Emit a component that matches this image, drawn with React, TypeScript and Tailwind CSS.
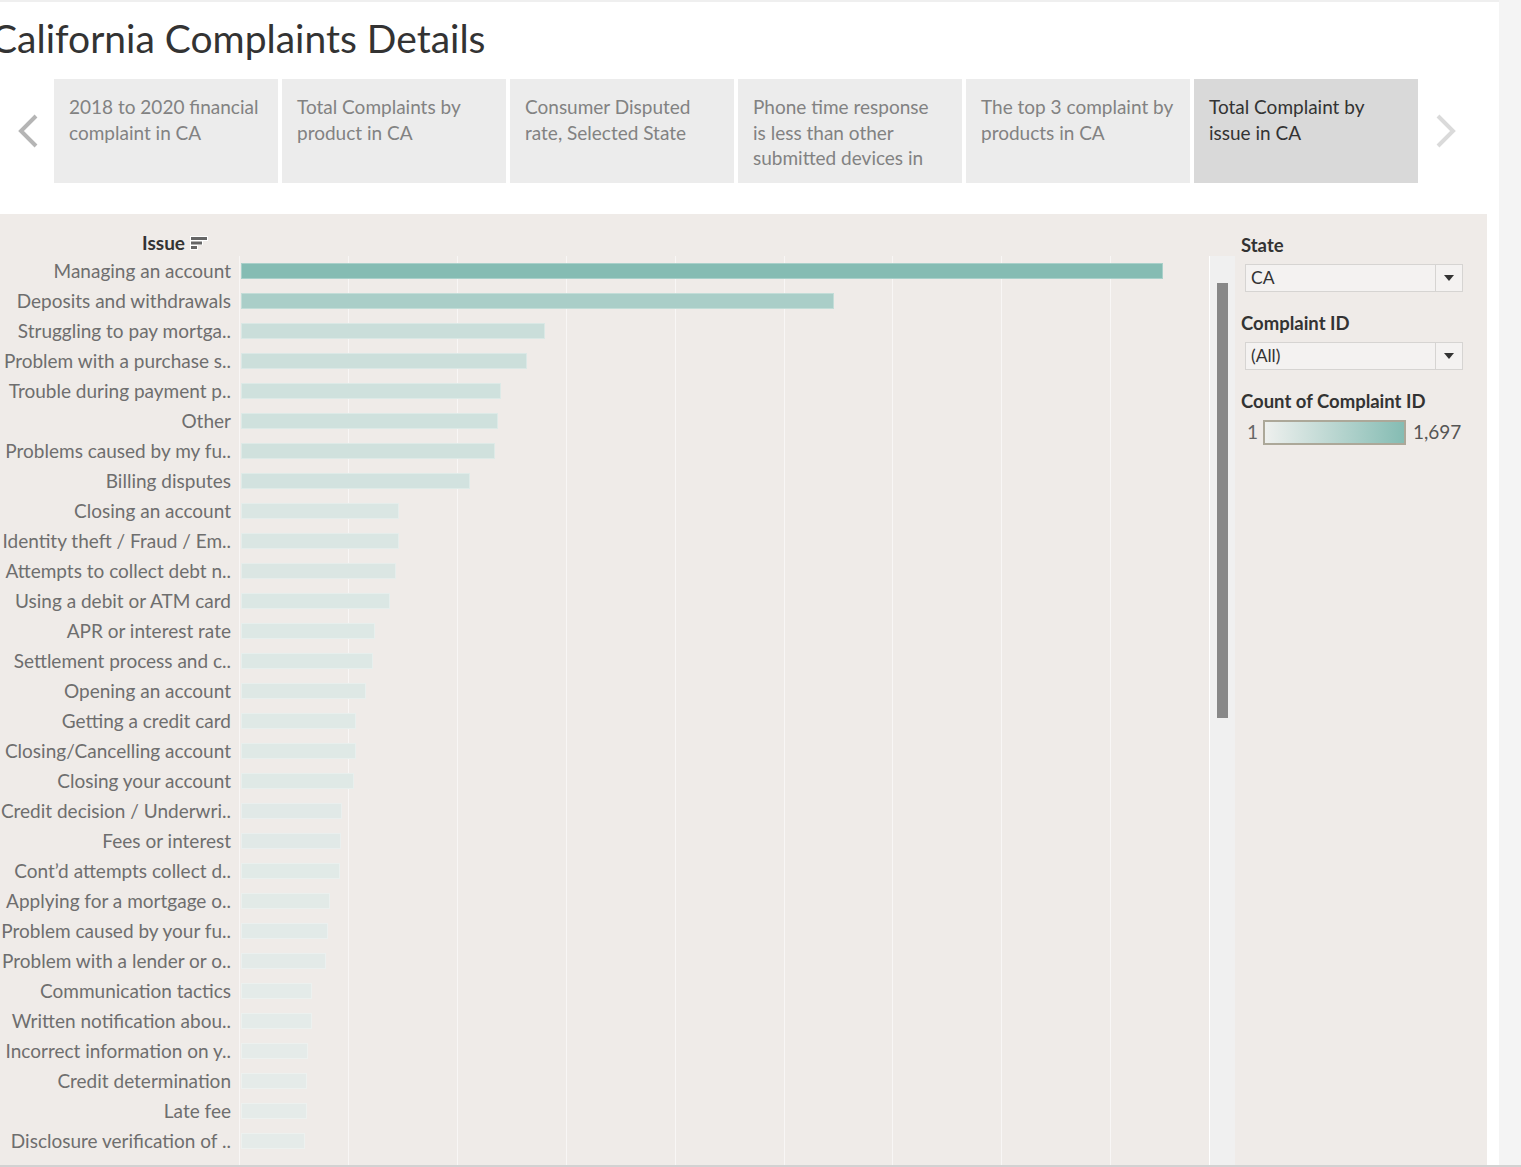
import React from "react"

const issues: [string, number][] = [
  ["Managing an account", 922],
  ["Deposits and withdrawals", 593],
  ["Struggling to pay mortga..", 304],
  ["Problem with a purchase s..", 286],
  ["Trouble during payment p..", 260],
  ["Other", 257],
  ["Problems caused by my fu..", 254],
  ["Billing disputes", 229],
  ["Closing an account", 158],
  ["Identity theft / Fraud / Em..", 158],
  ["Attempts to collect debt n..", 155],
  ["Using a debit or ATM card", 149],
  ["APR or interest rate", 134],
  ["Settlement process and c..", 132],
  ["Opening an account", 125],
  ["Getting a credit card", 115],
  ["Closing/Cancelling account", 115],
  ["Closing your account", 113],
  ["Credit decision / Underwri..", 101],
  ["Fees or interest", 100],
  ["Cont’d attempts collect d..", 99],
  ["Applying for a mortgage o..", 89],
  ["Problem caused by your fu..", 87],
  ["Problem with a lender or o..", 85],
  ["Communication tactics", 71],
  ["Written notification abou..", 71],
  ["Incorrect information on y..", 67],
  ["Credit determination", 66],
  ["Late fee", 66],
  ["Disclosure verification of ..", 64],
]

const tabs = [
  ["2018 to 2020 financial", "complaint in CA"],
  ["Total Complaints by", "product in CA"],
  ["Consumer Disputed", "rate, Selected State"],
  ["Phone time response", "is less than other", "submitted devices in"],
  ["The top 3 complaint by", "products in CA"],
  ["Total Complaint by", "issue in CA"],
]

const gridLines = [0, 109, 218, 327, 436, 545, 653, 762, 871]

// mix from the legend's light end to its dark end
const barColor = (w: number) => {
  const t = w / 922
  const lo = [236, 239, 237]
  const hi = [133, 188, 179]
  const c = lo.map((v, i) => Math.round(v + (hi[i] - v) * t))
  return `rgb(${c[0]},${c[1]},${c[2]})`
}

const Chevron = (props: { dir: "left" | "right"; color: string }) => (
  <svg width="22" height="36" viewBox="0 0 22 36">
    <polyline
      points={props.dir === "left" ? "19,3 4,18 19,33" : "3,3 18,18 3,33"}
      fill="none"
      stroke={props.color}
      strokeWidth="4"
    />
  </svg>
)

const SortIcon = () => (
  <svg width="18" height="16" viewBox="0 0 18 16">
    <rect x="0" y="1" width="18" height="5" fill="#fff" />
    <rect x="0" y="5" width="13" height="5" fill="#fff" />
    <rect x="0" y="10" width="8" height="5" fill="#fff" />
    <rect x="1" y="2" width="16" height="3" fill="#666" />
    <rect x="1" y="6.5" width="11" height="3" fill="#666" />
    <rect x="1" y="11" width="6" height="3" fill="#666" />
  </svg>
)

const Dropdown = (props: { value: string }) => (
  <div className="ml-[4px] flex h-[28px] w-[218px] items-stretch border border-[#d6d4d2] bg-[#f4f2f1]">
    <div className="flex flex-1 items-center pl-[5px] text-[17.5px] text-[#333]">{props.value}</div>
    <div className="flex w-[27px] items-center justify-center border-l border-[#d6d4d2]">
      <svg width="10" height="6" viewBox="0 0 10 6">
        <polygon points="0,0 10,0 5,6" fill="#333" />
      </svg>
    </div>
  </div>
)

export default function App() {
  return (
    <div className="flex h-[1167px] w-[1521px] flex-col overflow-hidden border-b-2 border-[#d2d2d2] bg-white font-['Lato',sans-serif]">
      <div className="flex flex-1">
        <div className="flex w-[1499px] flex-col border-t-2 border-[#efefef]">
          <div className="h-[77px] pt-[13px]">
            <div className="ml-[-9px] whitespace-nowrap text-[39px] leading-[46px] text-[#333]">
              California Complaints Details
            </div>
          </div>

          <div className="flex h-[104px] items-stretch">
            <div className="flex w-[54px] items-center pl-[17px]">
              <Chevron dir="left" color="#b5b5b5" />
            </div>
            <div className="flex gap-[4px]">
              {tabs.map((lines, i) => {
                const active = i === tabs.length - 1
                return (
                  <div
                    key={i}
                    className={
                      active
                        ? "w-[224px] bg-[#d9d9d9] pl-[15px] pt-[15px] text-[19px] leading-[25.5px] text-[#333]"
                        : "w-[224px] bg-[#ececec] pl-[15px] pt-[15px] text-[19px] leading-[25.5px] text-[#828282]"
                    }
                  >
                    {lines.map((l) => (
                      <div key={l} className="whitespace-nowrap">
                        {l}
                      </div>
                    ))}
                  </div>
                )
              })}
            </div>
            <div className="flex items-center pl-[17px]">
              <Chevron dir="right" color="#dadada" />
            </div>
          </div>

          <div className="h-[31px]" />

          <div className="flex flex-1 pr-[12px]">
            <div className="flex flex-1 bg-[#efebe8]">
              <div className="flex w-[1209px] flex-col">
                <div className="flex h-[42px] w-[240px] items-center justify-end gap-[5px] pr-[32px] pt-[16px]">
                  <span className="text-[19px] font-bold text-[#333]">Issue</span>
                  <SortIcon />
                </div>
                <div className="relative flex-1">
                  <div className="absolute inset-y-0 left-[239px] right-0">
                    {gridLines.map((x) => (
                      <div
                        key={x}
                        className="absolute inset-y-0 w-[1px] bg-[#f8f6f5]"
                        style={{ left: x }}
                      />
                    ))}
                  </div>
                  <div className="relative flex flex-col">
                    {issues.map(([name, w]) => (
                      <div key={name} className="flex h-[30px] items-center">
                        <div className="flex w-[240px] shrink-0 justify-end pr-[9px]">
                          <span className="whitespace-nowrap text-[19px] text-[#6e6e6e]">{name}</span>
                        </div>
                        <div className="flex-1 pl-[1px]">
                          <div
                            className="h-[16px] border border-white/30"
                            style={{ width: w, backgroundColor: barColor(w) }}
                          />
                        </div>
                      </div>
                    ))}
                  </div>
                </div>
              </div>

              <div className="flex w-[26px] flex-col">
                <div className="h-[42px]" />
                <div className="flex-1 border-l border-white bg-[#f0f0f0] pl-[7px] pt-[27px]">
                  <div className="h-[435px] w-[11px] bg-[#888]" />
                </div>
              </div>

              <div className="flex w-[252px] flex-col pl-[6px] pt-[21px]">
                <div className="text-[18.5px] font-bold leading-[20px] text-[#333]">State</div>
                <div className="mt-[9px]">
                  <Dropdown value="CA" />
                </div>
                <div className="mt-[21px] text-[18.5px] font-bold leading-[20px] text-[#333]">Complaint ID</div>
                <div className="mt-[9px]">
                  <Dropdown value="(All)" />
                </div>
                <div className="mt-[21px] text-[18.5px] font-bold leading-[20px] text-[#333]">
                  Count of Complaint ID
                </div>
                <div className="mt-[9px] flex h-[25px] items-center">
                  <span className="w-[22px] pl-[6px] text-[19px] text-[#666]">1</span>
                  <div className="h-[25px] w-[143px] border-2 border-[#aca899] bg-[linear-gradient(to_right,#eef0ee,#85bcb3)]" />
                  <span className="pl-[7px] text-[19px] text-[#555]">1,697</span>
                </div>
              </div>
            </div>
          </div>
        </div>
        <div className="flex-1 bg-[#f4f4f4]" />
      </div>
    </div>
  )
}
